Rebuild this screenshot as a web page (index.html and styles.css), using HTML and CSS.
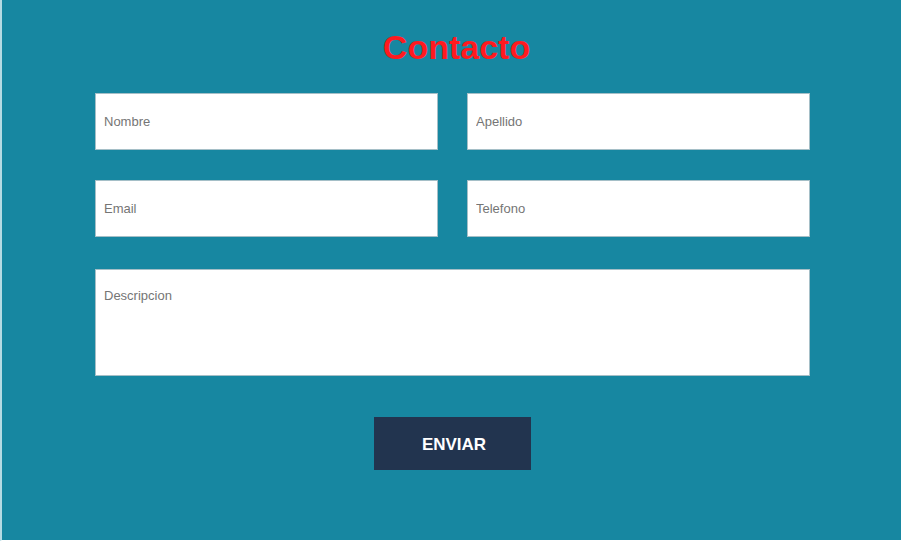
FILE: index.html
```html
<!DOCTYPE html>
<html lang="es">
<head>
  <meta charset="utf-8">
  <meta name="viewport" content="width=device-width, initial-scale=1">
  <title>Contacto</title>
  <link rel="stylesheet" href="styles.css">
</head>
<body>
  <main class="contact">
    <h1 class="contact-title">Contacto</h1>
    <form class="contact-form">
      <input class="field" type="text" name="nombre" placeholder="Nombre" aria-label="Nombre">
      <input class="field" type="text" name="apellido" placeholder="Apellido" aria-label="Apellido">
      <input class="field" type="email" name="email" placeholder="Email" aria-label="Email">
      <input class="field" type="tel" name="telefono" placeholder="Telefono" aria-label="Telefono">
      <textarea class="field field-message" name="descripcion" placeholder="Descripcion" aria-label="Descripcion"></textarea>
      <button class="submit" type="submit">ENVIAR</button>
    </form>
  </main>
</body>
</html>
```
FILE: styles.css
```css
* {
  box-sizing: border-box;
}

body {
  margin: 0;
  background: #1787a1;
  font-family: "Liberation Sans", Arial, sans-serif;
}

.contact {
  min-height: 100vh;
  padding: 27px 91px 70px 93px;
  border-right: 1px solid #fff;
  border-bottom: 1px solid #fff;
  border-left: 2px solid #b5dbe3;
  background: #1787a1;
}

.contact-title {
  margin: 0 0 26px;
  padding-left: 8px;
  color: #ff1a1f;
  font-size: 34px;
  line-height: 40px;
  text-align: center;
}

.contact-form {
  display: grid;
  grid-template-columns: 1fr 1fr;
  gap: 30px 29px;
}

.field {
  width: 100%;
  height: 57px;
  padding: 0 8px;
  border: 1px solid #a5bfc7;
  border-radius: 0;
  background: #fff;
  font: 13px/16px "Liberation Sans", Arial, sans-serif;
}

.field::placeholder {
  color: #757575;
}

.field-message {
  grid-column: 1 / -1;
  height: 107px;
  margin-top: 2px;
  padding-top: 18px;
  resize: none;
}

.submit {
  grid-column: 1 / -1;
  justify-self: center;
  margin-top: 11px;
  padding: 17px 45px 15px 48px;
  border: 0;
  background: #22344f;
  color: #fff;
  font: bold 17px/21px "Liberation Sans", Arial, sans-serif;
}
```
